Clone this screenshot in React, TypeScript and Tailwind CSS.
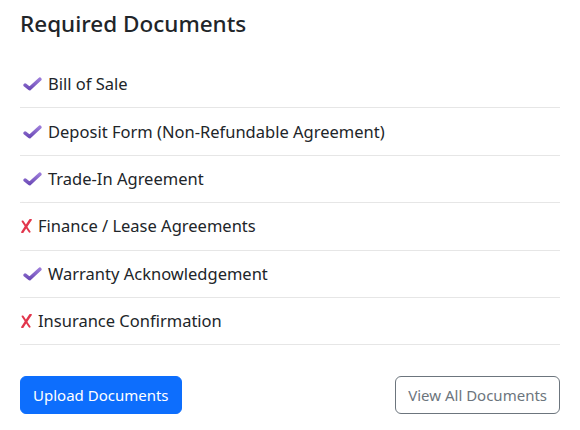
import React from 'react';

const documents = [
  { name: 'Bill of Sale', done: true },
  { name: 'Deposit Form (Non-Refundable Agreement)', done: true },
  { name: 'Trade-In Agreement', done: true },
  { name: 'Finance / Lease Agreements', done: false },
  { name: 'Warranty Acknowledgement', done: true },
  { name: 'Insurance Confirmation', done: false },
];

function CheckIcon() {
  return (
    <svg width="19" height="14" viewBox="0 0 19 14" className="mr-[6px] ml-[3px] shrink-0">
      <defs>
        <linearGradient id="chk" x1="0" y1="0" x2="0" y2="1">
          <stop offset="0" stopColor="#9a7ad8" />
          <stop offset="1" stopColor="#6e4db8" />
        </linearGradient>
      </defs>
      <path
        d="M2.2 8.2 L6.6 11.6 L16.8 2.2"
        fill="none"
        stroke="url(#chk)"
        strokeWidth="3.6"
        strokeLinecap="round"
        strokeLinejoin="round"
      />
    </svg>
  );
}

function CrossIcon() {
  return (
    <svg width="11" height="14" viewBox="0 0 11 14" className="mr-[6px] ml-[1px] shrink-0">
      <path d="M9.6 0.8 C7.2 4.2 4.4 8.6 1.4 13.2" fill="none" stroke="#e2364c" strokeWidth="2.4" strokeLinecap="round" />
      <path d="M1.6 2.4 C4 5.8 6.4 9.6 8.6 12.8" fill="none" stroke="#e2364c" strokeWidth="1.9" strokeLinecap="round" />
    </svg>
  );
}

export default function App() {
  return (
    <div className="min-h-screen bg-white px-5 pt-[10px] text-[#212529]" style={{ fontFamily: '"Noto Sans", sans-serif' }}>
      <h4 className="mb-[23px] text-[22.5px] font-medium leading-[28px]">Required Documents</h4>

      <ul>
        {documents.map((doc) => (
          <li key={doc.name} className="flex items-center border-b border-[#e6e6e6] py-[11.2px] text-[16.5px] leading-6">
            {doc.done ? <CheckIcon /> : <CrossIcon />}
            <span>{doc.name}</span>
          </li>
        ))}
      </ul>

      <div className="mt-[31px] flex items-center justify-between">
        <button className="rounded-md border border-[#0d6efd] bg-[#0d6efd] px-3 py-1.5 text-[15px] leading-6 text-white">
          Upload Documents
        </button>
        <button className="rounded-md border border-[#6c757d] bg-white px-3 py-1.5 text-[15px] leading-6 text-[#6c757d]">
          View All Documents
        </button>
      </div>
    </div>
  );
}
